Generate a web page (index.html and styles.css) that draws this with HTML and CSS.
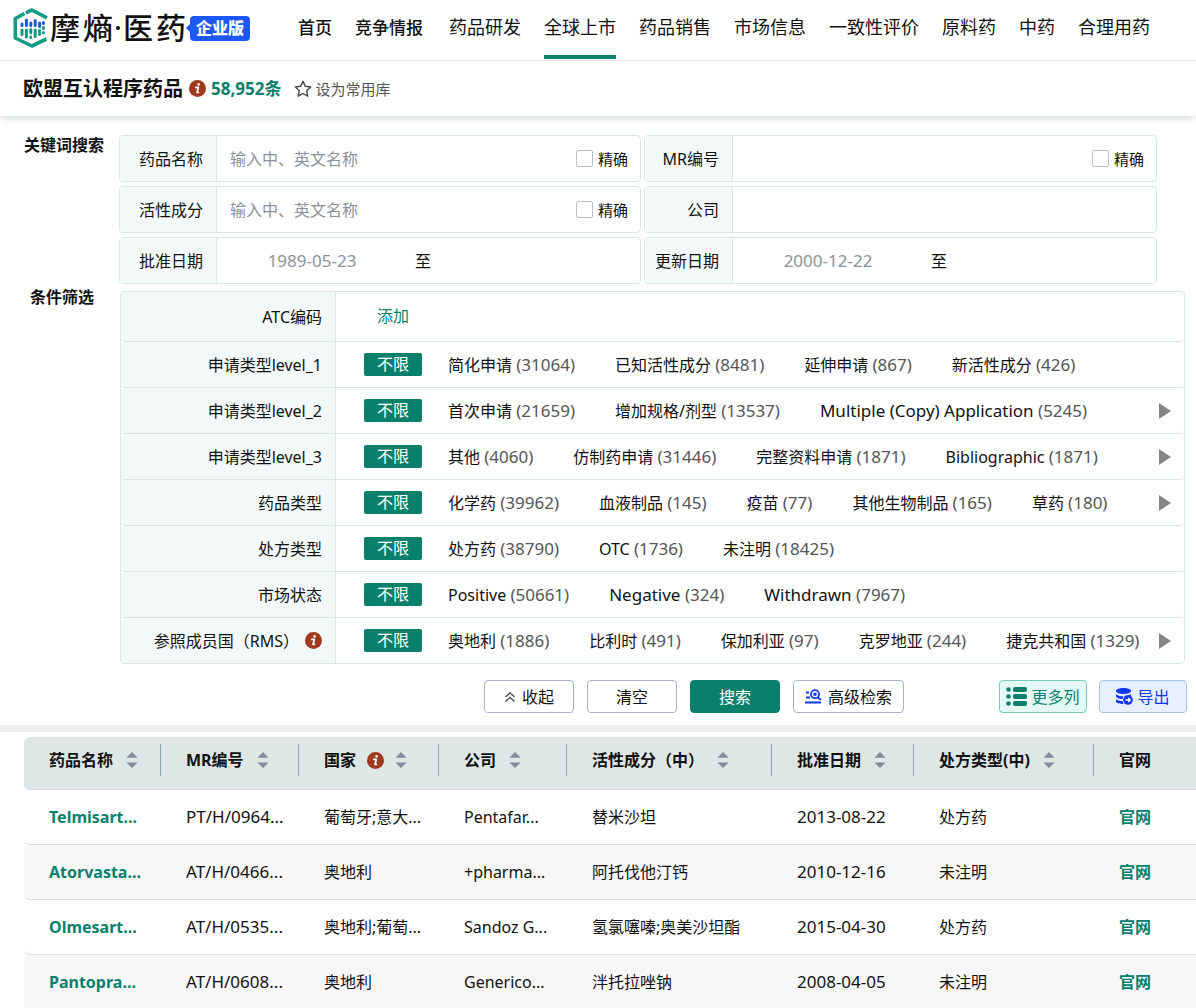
FILE: index.html
```html
<!DOCTYPE html>
<html lang="zh-CN">
<head>
    <meta charset="utf-8">
    <meta name="viewport" content="width=device-width, initial-scale=1">
    <title>欧盟互认程序药品 - 摩熵·医药</title>
    <link rel="stylesheet" href="styles.css">
</head>
<body>

    <!-- shared icons -->
    <svg class="sprite" aria-hidden="true">
        <symbol id="icon-info" viewBox="0 0 17 17">
            <circle cx="8.5" cy="8.5" r="8.5" fill="#a0391d"/>
            <circle cx="9.6" cy="4.4" r="1.3" fill="#fff"/>
            <path d="M6.8 7.4h2.6L8 12.4h1.5" fill="none" stroke="#fff" stroke-width="1.7" stroke-linecap="round" stroke-linejoin="round"/>
        </symbol>
        <symbol id="icon-sort" viewBox="0 0 12 18">
            <path d="M6 0l6 6H0zM6 17l6-6H0z" fill="#868b9c"/>
        </symbol>
        <symbol id="icon-next" viewBox="0 0 12 16">
            <path d="M0 0l12 8L0 16z" fill="#858585"/>
        </symbol>
    </svg>

    <header class="header">
        <a href="#" class="logo">
            <svg class="logo-mark" width="36" height="40" viewBox="0 0 36 40">
                <g fill="none" stroke="#139b84" stroke-width="3.6" stroke-linejoin="round">
                    <path d="M12.8 4.8L18.8 2L34 9.8"/>
                    <path d="M11.5 5.5L2.3 10.5V30L18.8 38L33.5 31"/>
                </g>
                <g fill="none" stroke="#1d57d8" stroke-width="3" stroke-linecap="round">
                    <path d="M9 16v1.500M13.400 12v5.500M17.800 15v2.500M22.200 12.500v5M26.600 15v3.500M30.400 14.500v1"/>
                </g>
                <g fill="none" stroke="#139b84" stroke-width="3" stroke-linecap="round">
                    <path d="M9 22v4.500M13.400 22v7M17.800 21.500v3.500M17.800 29v.5M22.200 22v6.500M26.600 22.500v4M30.400 19.500v1M30.400 24.500v.5"/>
                </g>
            </svg>
            <span class="logo-text"><span>摩</span><span>熵</span><i></i><span>医</span><span>药</span></span>
            <span class="logo-badge">企业版</span>
        </a>
        <nav class="nav">
            <div class="nav-main">
                <a href="#">首页</a>
                <a href="#">竞争情报</a>
            </div>
            <a href="#">药品研发</a>
            <a href="#" class="active">全球上市</a>
            <a href="#">药品销售</a>
            <a href="#">市场信息</a>
            <a href="#">一致性评价</a>
            <a href="#">原料药</a>
            <a href="#">中药</a>
            <a href="#">合理用药</a>
        </nav>
    </header>

    <div class="title-bar">
        <h1>欧盟互认程序药品</h1>
        <svg class="icon-info"><use href="#icon-info"/></svg>
        <strong class="total">58,952条</strong>
        <button type="button" class="favorite">
            <svg width="18" height="18" viewBox="0 0 18 18"><path d="M9 1.300l2.300 5 5.400.7-4 3.700 1.100 5.500L9 13.500l-4.800 2.700 1.100-5.500-4-3.700 5.400-.7z" fill="none" stroke="#444" stroke-width="1.400" stroke-linejoin="round"/></svg>
            设为常用库
        </button>
    </div>

    <form class="search">
        <div class="search-row">
            <h2>关键词搜索</h2>
            <div class="fields">
                <div class="field">
                    <label class="field-label" for="drug-name">药品名称</label>
                    <input type="text" id="drug-name" placeholder="输入中、英文名称">
                    <label class="exact"><input type="checkbox">精确</label>
                </div>
                <div class="field field-right">
                    <label class="field-label" for="mr-no">MR编号</label>
                    <input type="text" id="mr-no">
                    <label class="exact"><input type="checkbox">精确</label>
                </div>
                <div class="field">
                    <label class="field-label" for="ingredient">活性成分</label>
                    <input type="text" id="ingredient" placeholder="输入中、英文名称">
                    <label class="exact"><input type="checkbox">精确</label>
                </div>
                <div class="field field-right">
                    <label class="field-label" for="company">公司</label>
                    <input type="text" id="company">
                </div>
                <div class="field">
                    <label class="field-label" for="approve-from">批准日期</label>
                    <input type="text" class="date" id="approve-from" placeholder="1989-05-23">
                    <span class="to">至</span>
                    <input type="text" class="date" aria-label="批准日期 至">
                </div>
                <div class="field field-right">
                    <label class="field-label" for="update-from">更新日期</label>
                    <input type="text" class="date" id="update-from" placeholder="2000-12-22">
                    <span class="to">至</span>
                    <input type="text" class="date" aria-label="更新日期 至">
                </div>
            </div>
        </div>

        <div class="search-row filter-row">
            <h2>条件筛选</h2>
            <div class="filters">
                <div class="filter filter-atc">
                    <div class="filter-label">ATC编码</div>
                    <div class="filter-body">
                        <button type="button" class="add">添加</button>
                    </div>
                </div>
                <div class="filter">
                    <div class="filter-label">申请类型level_1</div>
                    <div class="filter-body">
                        <button type="button" class="any">不限</button>
                        <div class="options">
                            <a href="#">简化申请 <span>(31064)</span></a>
                            <a href="#">已知活性成分 <span>(8481)</span></a>
                            <a href="#">延伸申请 <span>(867)</span></a>
                            <a href="#">新活性成分 <span>(426)</span></a>
                        </div>
                    </div>
                </div>
                <div class="filter">
                    <div class="filter-label">申请类型level_2</div>
                    <div class="filter-body">
                        <button type="button" class="any">不限</button>
                        <div class="options">
                            <a href="#">首次申请 <span>(21659)</span></a>
                            <a href="#">增加规格/剂型 <span>(13537)</span></a>
                            <a href="#" class="latin">Multiple (Copy) Application <span>(5245)</span></a>
                        </div>
                        <button type="button" class="next" aria-label="更多"><svg><use href="#icon-next"/></svg></button>
                    </div>
                </div>
                <div class="filter">
                    <div class="filter-label">申请类型level_3</div>
                    <div class="filter-body">
                        <button type="button" class="any">不限</button>
                        <div class="options">
                            <a href="#">其他 <span>(4060)</span></a>
                            <a href="#">仿制药申请 <span>(31446)</span></a>
                            <a href="#">完整资料申请 <span>(1871)</span></a>
                            <a href="#">Bibliographic <span>(1871)</span></a>
                        </div>
                        <button type="button" class="next" aria-label="更多"><svg><use href="#icon-next"/></svg></button>
                    </div>
                </div>
                <div class="filter">
                    <div class="filter-label">药品类型</div>
                    <div class="filter-body">
                        <button type="button" class="any">不限</button>
                        <div class="options">
                            <a href="#">化学药 <span>(39962)</span></a>
                            <a href="#">血液制品 <span>(145)</span></a>
                            <a href="#">疫苗 <span>(77)</span></a>
                            <a href="#">其他生物制品 <span>(165)</span></a>
                            <a href="#">草药 <span>(180)</span></a>
                        </div>
                        <button type="button" class="next" aria-label="更多"><svg><use href="#icon-next"/></svg></button>
                    </div>
                </div>
                <div class="filter">
                    <div class="filter-label">处方类型</div>
                    <div class="filter-body">
                        <button type="button" class="any">不限</button>
                        <div class="options">
                            <a href="#">处方药 <span>(38790)</span></a>
                            <a href="#">OTC <span>(1736)</span></a>
                            <a href="#">未注明 <span>(18425)</span></a>
                        </div>
                    </div>
                </div>
                <div class="filter">
                    <div class="filter-label">市场状态</div>
                    <div class="filter-body">
                        <button type="button" class="any">不限</button>
                        <div class="options">
                            <a href="#">Positive <span>(50661)</span></a>
                            <a href="#" class="latin">Negative <span>(324)</span></a>
                            <a href="#" class="latin">Withdrawn <span>(7967)</span></a>
                        </div>
                    </div>
                </div>
                <div class="filter">
                    <div class="filter-label">参照成员国（RMS）<svg class="icon-info"><use href="#icon-info"/></svg></div>
                    <div class="filter-body">
                        <button type="button" class="any">不限</button>
                        <div class="options">
                            <a href="#">奥地利 <span>(1886)</span></a>
                            <a href="#">比利时 <span>(491)</span></a>
                            <a href="#">保加利亚 <span>(97)</span></a>
                            <a href="#">克罗地亚 <span>(244)</span></a>
                            <a href="#">捷克共和国 <span>(1329)</span></a>
                        </div>
                        <button type="button" class="next" aria-label="更多"><svg><use href="#icon-next"/></svg></button>
                    </div>
                </div>
            </div>
        </div>

        <div class="actions">
            <div class="actions-main">
                <button type="button" class="btn">
                    <svg width="12" height="12" viewBox="0 0 12 12"><path d="M1.500 6L6 1.800 10.500 6M1.500 10.500L6 6.300l4.500 4.200" fill="none" stroke="#444" stroke-width="1.300"/></svg>
                    收起
                </button>
                <button type="reset" class="btn">清空</button>
                <button type="button" class="btn btn-primary">搜索</button>
                <button type="button" class="btn btn-advanced">
                    <svg width="17" height="15" viewBox="0 0 17 15">
                        <g fill="none" stroke="#1238f0" stroke-width="1.800">
                            <path d="M1 3.500h3M1 8.500h4M0 13.500h16M13 8.500l3 2.500"/>
                            <circle cx="10" cy="5.200" r="4"/>
                        </g>
                        <circle cx="10" cy="5.200" r="1.700" fill="#1238f0"/>
                    </svg>
                    高级检索
                </button>
            </div>
            <div class="actions-side">
                <button type="button" class="btn btn-columns">
                    <svg width="21" height="19" viewBox="0 0 21 19" fill="#08806b">
                        <circle cx="2.500" cy="2.500" r="2.300"/><rect x="7" y="0" width="14" height="5" rx="2"/>
                        <circle cx="2.500" cy="9.500" r="2.300"/><rect x="7" y="7" width="14" height="5" rx="2"/>
                        <circle cx="2.500" cy="16.500" r="2.300"/><rect x="7" y="14" width="14" height="5" rx="2"/>
                    </svg>
                    更多列
                </button>
                <button type="button" class="btn btn-export">
                    <svg width="17" height="17" viewBox="0 0 17 17">
                        <path d="M0 3C0-1 15-1 15 3S0 7 0 3z" fill="#0f36f2"/>
                        <path d="M0 6.300c2 1.800 5 2 7.500 2L6.500 11C3 11 0 10 0 8zM0 11.300c2 1.400 4 1.700 6.500 1.700l1 3C3.500 16 0 15.300 0 13z" fill="#0f36f2"/>
                        <path d="M8 8c3 0 5.500-.8 7-2v2z" fill="#0f36f2"/>
                        <circle cx="12" cy="12" r="4.800" fill="#0f36f2"/>
                        <path d="M9.500 12h4.500M12.300 10l2 2-2 2" fill="none" stroke="#fff" stroke-width="1.300"/>
                    </svg>
                    导出
                </button>
            </div>
        </div>
    </form>

    <main class="results">
        <table>
            <colgroup>
                <col class="col-name">
                <col class="col-mr">
                <col class="col-country">
                <col class="col-company">
                <col class="col-ingredient">
                <col class="col-date">
                <col class="col-type">
                <col>
            </colgroup>
            <thead>
                <tr>
                    <th><div>药品名称<svg class="icon-sort"><use href="#icon-sort"/></svg></div></th>
                    <th><div>MR编号<svg class="icon-sort"><use href="#icon-sort"/></svg></div></th>
                    <th><div>国家<svg class="icon-info"><use href="#icon-info"/></svg><svg class="icon-sort"><use href="#icon-sort"/></svg></div></th>
                    <th><div>公司<svg class="icon-sort"><use href="#icon-sort"/></svg></div></th>
                    <th><div>活性成分（中）<svg class="icon-sort"><use href="#icon-sort"/></svg></div></th>
                    <th><div>批准日期<svg class="icon-sort"><use href="#icon-sort"/></svg></div></th>
                    <th><div>处方类型(中)<svg class="icon-sort"><use href="#icon-sort"/></svg></div></th>
                    <th><div>官网</div></th>
                </tr>
            </thead>
            <tbody>
                <tr>
                    <td><a href="#">Telmisart...</a></td>
                    <td class="latin">PT/H/0964...</td>
                    <td>葡萄牙;意大...</td>
                    <td>Pentafar...</td>
                    <td>替米沙坦</td>
                    <td class="latin">2013-08-22</td>
                    <td>处方药</td>
                    <td><a href="#">官网</a></td>
                </tr>
                <tr>
                    <td><a href="#">Atorvasta...</a></td>
                    <td class="latin">AT/H/0466...</td>
                    <td>奥地利</td>
                    <td>+pharma...</td>
                    <td>阿托伐他汀钙</td>
                    <td class="latin">2010-12-16</td>
                    <td>未注明</td>
                    <td><a href="#">官网</a></td>
                </tr>
                <tr>
                    <td><a href="#">Olmesart...</a></td>
                    <td class="latin">AT/H/0535...</td>
                    <td>奥地利;葡萄...</td>
                    <td>Sandoz G...</td>
                    <td>氢氯噻嗪;奥美沙坦酯</td>
                    <td class="latin">2015-04-30</td>
                    <td>处方药</td>
                    <td><a href="#">官网</a></td>
                </tr>
                <tr>
                    <td><a href="#">Pantopra...</a></td>
                    <td class="latin">AT/H/0608...</td>
                    <td>奥地利</td>
                    <td>Generico...</td>
                    <td>泮托拉唑钠</td>
                    <td class="latin">2008-04-05</td>
                    <td>未注明</td>
                    <td><a href="#">官网</a></td>
                </tr>
            </tbody>
        </table>
    </main>

</body>
</html>
```
FILE: styles.css
```css
* {
    box-sizing: border-box;
}

body {
    margin: 0;
    font-family: "Noto Sans", "Noto Sans CJK SC", sans-serif;
    font-size: 16px;
    line-height: 24px;
    color: #111;
    background-color: #fff;
}

h1,
h2 {
    margin: 0;
}

a {
    color: inherit;
    text-decoration: none;
}

button,
input {
    font: inherit;
    color: inherit;
}

button {
    padding: 0;
    border: none;
    background: none;
    cursor: pointer;
    white-space: nowrap;
}

svg {
    flex: none;
}

.sprite {
    display: none;
}

.icon-info {
    width: 17px;
    height: 17px;
}

.icon-sort {
    width: 12px;
    height: 17px;
}

.latin {
    font-size: 17px;
}

/* header */
.header {
    display: flex;
    height: 61px;
    padding-left: 13px;
    border-bottom: 1px solid #e2e4e6;
}

.logo {
    display: flex;
    align-items: center;
    width: 285px;
    height: 56px;
    flex: none;
}

.logo-text {
    display: flex;
    align-items: center;
    gap: 3px;
    margin-left: 1px;
    font-size: 30px;
    line-height: 40px;
    font-weight: 500;
}

.logo-text i {
    width: 4px;
    height: 4px;
    border-radius: 50%;
    background-color: #111;
}

.logo-badge {
    position: relative;
    width: 60px;
    height: 25px;
    margin-left: 4px;
    border-radius: 4px;
    background-color: #1d57f5;
    color: #fff;
    font-size: 16px;
    line-height: 24px;
    font-weight: 900;
    text-align: center;
}

.logo-badge::before {
    content: "";
    position: absolute;
    left: -4px;
    top: 8px;
    border: 4px solid transparent;
    border-left: none;
    border-right-color: #1d57f5;
}

.nav,
.nav-main {
    display: flex;
    gap: 23px;
}

.nav-main {
    margin-right: 3px;
    font-size: 17px;
    font-weight: 500;
}

.nav {
    font-size: 18px;
    white-space: nowrap;
}

.nav a {
    height: 59px;
    line-height: 55px;
}

.nav a.active {
    background: linear-gradient(#08806b, #08806b) bottom / 100% 4px no-repeat;
}

/* title */
.title-bar {
    display: flex;
    align-items: center;
    height: 55px;
    padding-left: 23px;
    box-shadow: 0 4px 8px -2px #cdd5d9;
}

.title-bar h1 {
    margin-right: 6px;
    font-size: 20px;
    line-height: 28px;
}

.total {
    margin-left: 5px;
    color: #08806b;
    font-size: 17px;
}

.favorite {
    display: flex;
    align-items: center;
    gap: 3px;
    margin-left: 13px;
    color: #555;
    font-size: 15px;
}

/* search form */
.search {
    padding-top: 19px;
}

.search-row {
    display: flex;
}

.search h2 {
    width: 119px;
    flex: none;
    padding-left: 24px;
    font-size: 16px;
    line-height: 20px;
}

.fields {
    flex: 1;
    display: grid;
    grid-template-columns: 522fr 513fr;
    gap: 4px 3px;
    margin-right: 39px;
}

.field {
    display: flex;
    align-items: center;
    height: 47px;
    min-width: 0;
    border: 1px solid #d5e8e3;
    border-radius: 4px;
}

.field-label {
    width: 97px;
    flex: none;
    align-self: stretch;
    padding-right: 13px;
    border-right: 1px solid #d5e8e3;
    background-color: #f3f9f9;
    line-height: 47px;
    text-align: right;
}

.field-right .field-label {
    width: 88px;
}

.field input[type="text"] {
    flex: 1;
    min-width: 0;
    height: 40px;
    padding: 0 13px;
    border: none;
    outline: none;
    background: none;
}

.field input.date {
    flex: 0 1 190px;
    font-size: 17px;
    text-align: center;
}

.field input::placeholder {
    color: #8b919c;
    opacity: 1;
}

.to {
    margin: 0 8px;
}

.exact {
    display: flex;
    align-items: center;
    gap: 5px;
    margin-right: 12px;
    font-size: 15px;
}

.exact input {
    appearance: none;
    width: 17px;
    height: 17px;
    margin: 0;
    border: 1px solid #b9bdd0;
    border-radius: 2px;
    background-color: #fff;
}

/* filters */
.filter-row {
    margin-top: 7px;
}

.filter-row h2 {
    width: 120px;
    padding-left: 30px;
    line-height: 12px;
}

.filters {
    flex: 1;
    min-width: 0;
    margin-right: 11px;
    border: 1px solid #d5e8e3;
    border-radius: 4px;
}

.filter {
    display: flex;
    height: 46px;
    border-bottom: 1px solid #d5e8e3;
    border-radius: 4px;
}

.filter:last-child {
    height: 45px;
    border-bottom: none;
}

.filter-atc {
    height: 50px;
}

.filter-label {
    display: flex;
    align-items: center;
    justify-content: flex-end;
    width: 215px;
    flex: none;
    padding-right: 13px;
    border-right: 1px solid #d5e8e3;
    border-radius: 4px 0 0 4px;
    background-color: #f3f9f9;
}

.filter-label .icon-info {
    margin-left: 6px;
}

.filter-body {
    flex: 1;
    display: flex;
    align-items: center;
    min-width: 0;
    padding-left: 28px;
}

.any,
.add {
    width: 58px;
    height: 23px;
    flex: none;
    line-height: 23px;
}

.any {
    border-radius: 2px;
    background-color: #08806b;
    color: #fff;
}

.add {
    color: #08806b;
}

.options {
    flex: 1;
    display: flex;
    gap: 40px;
    min-width: 0;
    margin-left: 26px;
    overflow: hidden;
    white-space: nowrap;
}

.options span {
    color: #555;
    font-size: 17px;
}

.next {
    display: flex;
    width: 12px;
    flex: none;
    margin-right: 13px;
}

.next svg {
    width: 12px;
    height: 16px;
}

/* buttons under the filters */
.actions {
    display: flex;
    justify-content: flex-end;
    padding: 16px 9px 12px 0;
    border-bottom: 7px solid #eeeef2;
}

.actions-main {
    display: flex;
    gap: 13px;
    margin-right: 95px;
}

.actions-side {
    display: flex;
    gap: 12px;
}

.btn {
    display: flex;
    align-items: center;
    justify-content: center;
    gap: 6px;
    width: 90px;
    height: 33px;
    border: 1px solid #a8b2c8;
    border-radius: 4px;
}

.btn-primary {
    border-color: #08806b;
    background-color: #08806b;
    color: #fff;
}

.btn-advanced {
    width: 111px;
}

.btn-columns,
.btn-export {
    width: 88px;
    gap: 4px;
}

.btn-columns {
    border-color: #77cbbb;
    background-color: #e4f8f5;
    color: #08806b;
}

.btn-export {
    border-color: #a5c4e4;
    background-color: #e7f0ff;
    color: #0f36f2;
}

/* results */
.results {
    padding: 5px 0 0 24px;
    overflow: hidden;
}

table {
    width: 100%;
    table-layout: fixed;
    border-collapse: separate;
    border-spacing: 0;
    white-space: nowrap;
}

.col-name {
    width: 137px;
}

.col-mr {
    width: 138px;
}

.col-country {
    width: 140px;
}

.col-company {
    width: 128px;
}

.col-ingredient {
    width: 205px;
}

.col-date {
    width: 142px;
}

.col-type {
    width: 180px;
}

th {
    height: 53px;
    padding: 7px 0 13px;
    border-bottom: 1px solid #d3dbe6;
    background-color: #dee7e6;
    text-align: left;
}

th div {
    display: flex;
    align-items: center;
    gap: 13px;
    height: 32px;
    padding-left: 25px;
    border-right: 1px solid #86a8a2;
}

th:last-child div {
    border-right: none;
}

th .icon-info {
    margin: 0 -2px;
}

th:first-child,
td:first-child {
    border-radius: 6px 0 0 6px;
}

td {
    height: 55px;
    padding: 0 0 0 25px;
    border-bottom: 1px solid #d6dae8;
}

tbody tr:nth-child(even) td {
    background-color: #f7f7f7;
}

td a {
    color: #08806b;
    font-weight: 700;
}
```
